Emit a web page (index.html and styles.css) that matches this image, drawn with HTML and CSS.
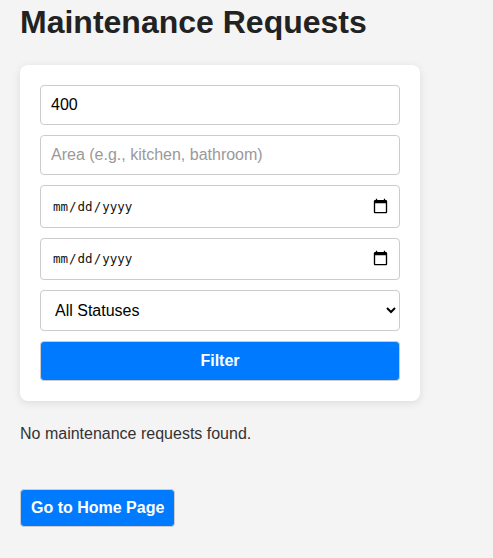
FILE: index.html
```html
<!DOCTYPE html>
<html lang="en">
<head>
<meta charset="utf-8">
<title>Maintenance Requests</title>
<link rel="stylesheet" href="styles.css">
</head>
<body>
<h1 class="title">Maintenance Requests</h1>
<form class="filter-card">
  <input class="field" type="text" value="400">
  <input class="field" type="text" placeholder="Area (e.g., kitchen, bathroom)">
  <input class="field date" type="date">
  <input class="field date" type="date">
  <select class="field">
    <option>All Statuses</option>
    <option>Pending</option>
    <option>In Progress</option>
    <option>Completed</option>
  </select>
  <button class="btn btn-block" type="button">Filter</button>
</form>
<p class="empty">No maintenance requests found.</p>
<div class="actions">
  <button class="btn btn-home" type="button">Go to Home Page</button>
</div>
</body>
</html>
```
FILE: styles.css
```css
html, body {
  margin: 0;
  background: #f4f4f4;
}
body {
  padding: 4px 20px 20px;
  font-family: "Liberation Sans", Arial, sans-serif;
  color: #333;
}
.title {
  font-size: 32px;
  color: #222;
  margin: 0 0 24px;
}
.filter-card {
  width: 400px;
  box-sizing: border-box;
  background: #fff;
  padding: 20px;
  border-radius: 8px;
  box-shadow: 0 2px 8px rgba(0, 0, 0, 0.1);
  display: flex;
  flex-direction: column;
  gap: 10px;
}
.field {
  width: 100%;
  box-sizing: border-box;
  padding: 10px;
  font-family: "Liberation Sans", Arial, sans-serif;
  font-size: 16px;
  border: 1px solid #ccc;
  border-radius: 4px;
  background: #fff;
  color: #000;
  margin: 0;
}
.field::placeholder {
  color: #999;
}
.field.date {
  font-family: "DejaVu Sans Mono", monospace;
  font-size: 12.5px;
  height: 42.6px;
  padding: 0 10px 0 11px;
  color: #111;
}
.field.date::-webkit-calendar-picker-indicator {
  width: 17px;
  height: 17px;
  padding: 0;
  margin: 0;
}
.btn {
  background: #007bff;
  color: #fff;
  border: 1px solid #ccc;
  border-radius: 4px;
  padding: 10px;
  font-family: "Liberation Sans", Arial, sans-serif;
  font-size: 16px;
  font-weight: bold;
  cursor: pointer;
}
.btn-block {
  width: 100%;
}
.btn-home {
  padding: 9px 10px;
}
.empty {
  margin: 24px 0 0;
  font-size: 16px;
}
.actions {
  margin-top: 46px;
}
```
